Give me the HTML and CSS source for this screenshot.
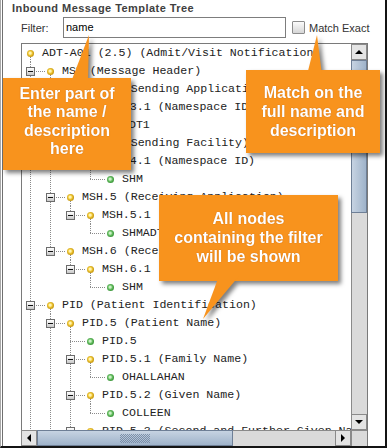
FILE: index.html
```html
<!DOCTYPE html>
<html lang="en">

<head>
    <meta charset="UTF-8">
    <title>Inbound Message Template Tree</title>
    <link rel="stylesheet" href="styles.css">
</head>

<body>
    <div class="frame">
        <div class="panel">
            <div class="title">Inbound Message Template Tree</div>
            <div class="filter">
                <span class="flabel">Filter:</span>
                <div class="input">name</div>
                <span class="check"></span>
                <span class="clabel">Match Exact</span>
            </div>
            <div class="tree">
                <div class="view">
                    <div class="rows">
                        <div class="row"><i class="c root down"><b class="dot y"></b></i><span class="t">ADT-A01 (2.5) (Admit/Visit Notification)</span></div>
                        <div class="row"><i class="c tee"><b class="exp"></b></i><i class="c node down"><b class="dot y"></b></i><span class="t">MSH (Message Header)</span></div>
                        <div class="row"><i class="c pipe"></i><i class="c tee"><b class="exp"></b></i><i class="c node down"><b class="dot y"></b></i><span class="t">MSH.3 (Sending Application)</span></div>
                        <div class="row"><i class="c pipe"></i><i class="c pipe"></i><i class="c elbow"><b class="exp"></b></i><i class="c node down"><b class="dot y"></b></i><span class="t">MSH.3.1 (Namespace ID)</span></div>
                        <div class="row"><i class="c pipe"></i><i class="c pipe"></i><i class="c"></i><i class="c elbow"></i><i class="c node"><b class="dot g"></b></i><span class="t">ADT1</span></div>
                        <div class="row"><i class="c pipe"></i><i class="c tee"><b class="exp"></b></i><i class="c node down"><b class="dot y"></b></i><span class="t">MSH.4 (Sending Facility)</span></div>
                        <div class="row"><i class="c pipe"></i><i class="c pipe"></i><i class="c elbow"><b class="exp"></b></i><i class="c node down"><b class="dot y"></b></i><span class="t">MSH.4.1 (Namespace ID)</span></div>
                        <div class="row"><i class="c pipe"></i><i class="c pipe"></i><i class="c"></i><i class="c elbow"></i><i class="c node"><b class="dot g"></b></i><span class="t">SHM</span></div>
                        <div class="row"><i class="c pipe"></i><i class="c tee"><b class="exp"></b></i><i class="c node down"><b class="dot y"></b></i><span class="t">MSH.5 (Receiving Application)</span></div>
                        <div class="row"><i class="c pipe"></i><i class="c pipe"></i><i class="c elbow"><b class="exp"></b></i><i class="c node down"><b class="dot y"></b></i><span class="t">MSH.5.1 (Namespace ID)</span></div>
                        <div class="row"><i class="c pipe"></i><i class="c pipe"></i><i class="c"></i><i class="c elbow"></i><i class="c node"><b class="dot g"></b></i><span class="t">SHMADT</span></div>
                        <div class="row"><i class="c pipe"></i><i class="c elbow"><b class="exp"></b></i><i class="c node down"><b class="dot y"></b></i><span class="t">MSH.6 (Receiving Facility)</span></div>
                        <div class="row"><i class="c pipe"></i><i class="c"></i><i class="c elbow"><b class="exp"></b></i><i class="c node down"><b class="dot y"></b></i><span class="t">MSH.6.1 (Namespace ID)</span></div>
                        <div class="row"><i class="c pipe"></i><i class="c"></i><i class="c"></i><i class="c elbow"></i><i class="c node"><b class="dot g"></b></i><span class="t">SHM</span></div>
                        <div class="row"><i class="c tee"><b class="exp"></b></i><i class="c node down"><b class="dot y"></b></i><span class="t">PID (Patient Identification)</span></div>
                        <div class="row"><i class="c pipe"></i><i class="c tee"><b class="exp"></b></i><i class="c node down"><b class="dot y"></b></i><span class="t">PID.5 (Patient Name)</span></div>
                        <div class="row"><i class="c pipe"></i><i class="c pipe"></i><i class="c tee"></i><i class="c node"><b class="dot g"></b></i><span class="t">PID.5</span></div>
                        <div class="row"><i class="c pipe"></i><i class="c pipe"></i><i class="c tee"><b class="exp"></b></i><i class="c node down"><b class="dot y"></b></i><span class="t">PID.5.1 (Family Name)</span></div>
                        <div class="row"><i class="c pipe"></i><i class="c pipe"></i><i class="c pipe"></i><i class="c elbow"></i><i class="c node"><b class="dot g"></b></i><span class="t">OHALLAHAN</span></div>
                        <div class="row"><i class="c pipe"></i><i class="c pipe"></i><i class="c tee"><b class="exp"></b></i><i class="c node down"><b class="dot y"></b></i><span class="t">PID.5.2 (Given Name)</span></div>
                        <div class="row"><i class="c pipe"></i><i class="c pipe"></i><i class="c pipe"></i><i class="c elbow"></i><i class="c node"><b class="dot g"></b></i><span class="t">COLLEEN</span></div>
                        <div class="row"><i class="c pipe"></i><i class="c pipe"></i><i class="c tee"><b class="exp"></b></i><i class="c node down"><b class="dot y"></b></i><span class="t">PID.5.3 (Second and Further Given Names)</span></div>
                    </div>
                </div>
                <div class="vbar">
                    <div class="btn"><span class="arr up"></span></div>
                    <div class="vtrack"><div class="vthumb"></div></div>
                    <div class="btn"><span class="arr down"></span></div>
                </div>
                <div class="hbar">
                    <div class="btn"><span class="arr left"></span></div>
                    <div class="htrack"><div class="hthumb"><span class="grip"></span></div></div>
                    <div class="btn"><span class="arr right"></span></div>
                </div>
                <div class="corner"></div>
            </div>
        </div>

        <!-- callouts -->
        <div class="callout co1">
            <span class="tail"></span>
            <div class="bubble">Enter part of<br>the name /<br>description<br>here</div>
        </div>
        <div class="callout co2">
            <span class="tail"></span>
            <div class="bubble">Match on the<br>full name and<br>description</div>
        </div>
        <div class="callout co3">
            <div class="bubble">All nodes<br>containing the filter<br>will be shown</div>
            <span class="tail"></span>
        </div>
    </div>
</body>

</html>
```

FILE: styles.css
```css
* {
    box-sizing: border-box;
}

body {
    margin: 0;
    font-family: "Liberation Sans", Arial, sans-serif;
    font-size: 11px;
    color: #2a2a2a;
}

.frame {
    position: relative;
    width: 387px;
    height: 448px;
    background: #fff;
    border-left: 1px solid #a8a8a8;
    border-right: 2px solid #141414;
    border-bottom: 2px solid #141414;
    overflow: hidden;
}

.panel {
    height: 100%;
    margin-left: 1px;
    border-left: 1px solid #707070;
    padding-top: 2px;
}

.title {
    padding-left: 9px;
    font-weight: bold;
    line-height: 13px;
    letter-spacing: 0.45px;
    color: #404040;
}

/* filter row */
.filter {
    display: flex;
    align-items: center;
    height: 21px;
    margin-top: 2px;
    padding-left: 18px;
}

.flabel {
    width: 42px;
    color: #333;
}

.input {
    width: 223px;
    height: 21px;
    border: 1px solid #7d7d7d;
    padding-left: 2px;
    line-height: 19px;
    color: #000;
}

.check {
    width: 13px;
    height: 13px;
    margin-left: 6px;
    border: 1px solid #8c8c8c;
    border-radius: 1px;
    background: linear-gradient(#fbfbfb, #d6d6d6);
}

.clabel {
    margin-left: 4px;
    color: #333;
}

/* tree */
.tree {
    --dv: repeating-linear-gradient(to bottom, #8a8a8a 0 1px, transparent 1px 2px);
    --dh: repeating-linear-gradient(to right, #8a8a8a 0 1px, transparent 1px 2px);
    width: 347px;
    height: 403px;
    margin: 5px 0 0 18px;
    border: 1px solid #7a7a7a;
    border-bottom: none;
    display: grid;
    grid-template-columns: 329px 16px;
    grid-template-rows: 386px 16px;
}

.view {
    overflow: hidden;
}

.rows {
    margin-left: -2px;
}

.row {
    display: flex;
    height: 18px;
    white-space: nowrap;
}

.c {
    flex: none;
    width: 20px;
    height: 18px;
    display: flex;
    align-items: flex-start;
}

.pipe {
    background: var(--dv) 10px 0 / 1px 100% no-repeat;
}

.tee {
    background: var(--dv) 10px 0 / 1px 100% no-repeat,
        var(--dh) 10px 9px / 10px 1px no-repeat;
}

.elbow {
    background: var(--dv) 10px 0 / 1px 10px no-repeat,
        var(--dh) 10px 9px / 10px 1px no-repeat;
}

.node {
    background: var(--dh) 0 9px / 6px 1px no-repeat;
}

.node.down {
    background: var(--dh) 0 9px / 6px 1px no-repeat,
        var(--dv) 10px 11px / 1px 7px no-repeat;
}

.root.down {
    background: var(--dv) 10px 11px / 1px 7px no-repeat;
}

.exp {
    width: 9px;
    height: 9px;
    margin: 5px 0 0 6px;
    border: 1px solid #6c6c6c;
    background: linear-gradient(#fff, #c8c8c8);
    display: flex;
    align-items: center;
    justify-content: center;
}

.exp::before {
    content: "";
    width: 5px;
    height: 1px;
    background: #111;
}

.dot {
    width: 7px;
    height: 7px;
    margin: 6px 0 0 7px;
    border-radius: 50%;
}

.dot.y {
    background: radial-gradient(circle at 45% 45%, #fff3b0 0 1px, #f2cb3a 2px, #c99a12 3.5px);
}

.dot.g {
    background: radial-gradient(circle at 45% 45%, #c9f0c4 0 1px, #6fc46a 2px, #3f9a3d 3.5px);
}

.t {
    flex: none;
    padding-left: 2px;
    font: 11.6px/18px "Liberation Mono", "Courier New", monospace;
    color: #222;
}

/* scrollbars */
.vbar {
    display: flex;
    flex-direction: column;
    background: #dadada;
    border-left: 1px solid #8a8a8a;
}

.hbar {
    display: flex;
    background: #dadada;
    border-top: 1px solid #8a8a8a;
}

.btn {
    flex: none;
    width: 16px;
    height: 16px;
    margin: -1px 0 0 -1px;
    border: 1px solid #8a8a8a;
    background: #e4e4e4;
    display: flex;
    align-items: center;
    justify-content: center;
}

.vbar .btn {
    width: 16px;
    margin: 0 0 0 -1px;
}

.vtrack {
    flex: 1;
}

.vthumb {
    height: 153px;
    margin-left: -1px;
    border: 1px solid #6e7f96;
    background: linear-gradient(to right, #c6d3e2, #9fb3ca);
}

.htrack {
    flex: 1;
    margin-top: -1px;
}

.hthumb {
    width: 196px;
    height: 16px;
    border: 1px solid #6e7f96;
    background: linear-gradient(#c6d3e2, #9fb3ca);
    display: flex;
    align-items: center;
    justify-content: center;
}

.grip {
    width: 30px;
    height: 9px;
    background: repeating-conic-gradient(#7a8ea8 0 25%, transparent 0 50%) 0 0 / 2px 2px;
}

.corner {
    background: #dadada;
    border-top: 1px solid #8a8a8a;
    border-left: 1px solid #8a8a8a;
}

.arr {
    width: 0;
    height: 0;
}

.arr.up {
    border: 4px solid transparent;
    border-top: none;
    border-bottom: 4px solid #000;
}

.arr.down {
    border: 4px solid transparent;
    border-bottom: none;
    border-top: 4px solid #000;
}

.arr.left {
    border: 4px solid transparent;
    border-left: none;
    border-right: 4px solid #000;
}

.arr.right {
    border: 4px solid transparent;
    border-right: none;
    border-left: 4px solid #000;
}

/* callouts */
.callout {
    position: absolute;
    filter: drop-shadow(3px 3px 2px rgba(0, 0, 0, 0.5));
}

.bubble {
    height: 100%;
    background: #f8931d;
    color: #fff;
    font: bold 16px "Liberation Sans", Arial, sans-serif;
    text-align: center;
    text-shadow: 0 0 1px rgba(140, 60, 0, 0.6);
}

.tail {
    position: absolute;
    background: #f8931d;
}

.co1 {
    left: 2px;
    top: 78px;
    width: 128px;
    height: 92px;
}

.co1 .bubble {
    padding-top: 7px;
    line-height: 18.3px;
}

.co1 .tail {
    left: 66px;
    top: -44px;
    width: 24px;
    height: 48px;
    clip-path: polygon(20px 1px, 2px 48px, 19px 48px);
}

.co2 {
    left: 245px;
    top: 70px;
    width: 134px;
    height: 83px;
}

.co2 .bubble {
    padding-top: 13px;
    line-height: 19px;
}

.co2 .tail {
    left: 55px;
    top: -37px;
    width: 25px;
    height: 42px;
    clip-path: polygon(16px 2px, 6px 42px, 21px 42px);
}

.co3 {
    left: 158px;
    top: 195px;
    width: 179px;
    height: 86px;
}

.co3 .bubble {
    padding-top: 14px;
    line-height: 19px;
}

.co3 .tail {
    left: 42px;
    top: 81px;
    width: 40px;
    height: 45px;
    clip-path: polygon(18px 0, 38px 0, 2px 43px);
}
```
